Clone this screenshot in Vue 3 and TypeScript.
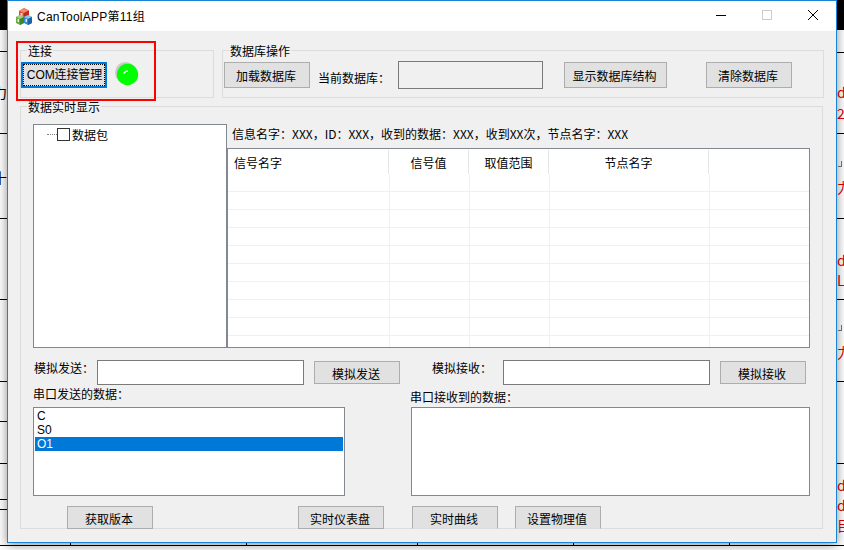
<script setup lang="ts">
const leftLines: number[] = [51, 133, 218, 299, 381, 421, 463, 499, 509]
const rightLines: number[] = [52, 133, 218, 299, 381, 463]
const ticks: number[] = [70, 246, 417, 573, 729]
const returnMarks: number[] = [161, 325]
const scraps = [
  { t: '力', x: -7, y: 83, c: 'black' },
  { t: '十', x: -7, y: 168, c: 'black' },
  { t: 'dl', x: 837, y: 83, c: 'red' },
  { t: '2', x: 837, y: 104, c: 'red' },
  { t: '力', x: 837, y: 178, c: 'red' },
  { t: 'dl', x: 837, y: 251, c: 'red' },
  { t: 'L5', x: 837, y: 271, c: 'red' },
  { t: '力', x: 837, y: 343, c: 'red' },
  { t: 'dl', x: 837, y: 476, c: 'red' },
  { t: 'dl', x: 837, y: 496, c: 'red' },
  { t: '目', x: 837, y: 516, c: 'red' },
]
const columns = ['信号名字', '信号值', '取值范围', '节点名字', '']
const rowCount = 10
const sent = ['C', 'S0', 'O1']
</script>

<template>
  <div class="desktop">
    <div class="band band-l"></div>
    <div class="band band-r"></div>
    <i v-for="y in leftLines" :key="'l' + y" class="rule rule-l" :style="{ top: y + 'px' }"></i>
    <i v-for="y in rightLines" :key="'r' + y" class="rule rule-r" :style="{ top: y + 'px' }"></i>
    <i class="rule-b"></i>
    <i v-for="x in ticks" :key="'t' + x" class="tick" :style="{ left: x + 'px' }"></i>
    <i v-for="y in returnMarks" :key="'m' + y" class="ret" :style="{ top: y + 'px' }"></i>
    <span
      v-for="(s, i) in scraps"
      :key="i"
      class="scrap"
      :class="s.c"
      :style="{ left: s.x + 'px', top: s.y + 'px' }"
    >{{ s.t }}</span>

    <div class="window">
      <header class="titlebar">
        <svg class="app-icon" width="16" height="17" viewBox="0 0 16 17">
          <path d="M3 3L8 0L13 2.5V8L8 11L3 8Z" fill="#dc4a2e" />
          <path d="M3 3L8 0L13 2.5L8 5Z" fill="#f08a6a" />
          <path d="M8 5L13 2.5V8L8 11Z" fill="#b92e1c" />
          <rect x="4.5" y="5" width="2" height="3" fill="#f7d3c6" />
          <path d="M0 9L4 7L8 9V15L4 17L0 15Z" fill="#6aa845" />
          <path d="M0 9L4 7L8 9L4 11Z" fill="#a3cf7e" />
          <path d="M4 11L8 9V15L4 17Z" fill="#45832c" />
          <rect x="1.5" y="11" width="1.5" height="3" fill="#e2f0d4" />
          <path d="M8 9L12 7L16 9V15L12 17L8 15Z" fill="#2f8bd0" />
          <path d="M8 9L12 7L16 9L12 11Z" fill="#86c4ee" />
          <path d="M12 11L16 9V15L12 17Z" fill="#1c639f" />
          <rect x="9.5" y="11" width="1.5" height="3" fill="#d8ecfa" />
        </svg>
        <span class="title">CanToolAPP第11组</span>
        <div class="controls">
          <span class="ctl">
            <svg width="10" height="10" viewBox="0 0 10 10"><path d="M0 5.5H10" stroke="#000" /></svg>
          </span>
          <span class="ctl">
            <svg width="10" height="10" viewBox="0 0 10 10"><rect x=".5" y=".5" width="9" height="9" fill="none" stroke="#ccc" /></svg>
          </span>
          <span class="ctl">
            <svg width="10" height="10" viewBox="0 0 10 10"><path d="M0 0L10 10M10 0L0 10" stroke="#000" stroke-width="1" /></svg>
          </span>
        </div>
      </header>

      <main class="content">
        <div class="top-row">
          <fieldset class="group g-conn">
            <span class="legend">连接</span>
            <button class="btn btn-focus"><span class="focus-ring">COM连接管理</span></button>
            <svg class="led" width="24" height="24" viewBox="0 0 24 24">
              <circle cx="10.5" cy="10.5" r="10.5" fill="#c9c9c9" />
              <circle cx="12.5" cy="12.5" r="10.7" fill="#00ff00" />
              <path d="M8.5 11.5L11 9.2H13" stroke="#fff" stroke-width="1.4" fill="none" />
            </svg>
          </fieldset>

          <fieldset class="group g-db">
            <span class="legend">数据库操作</span>
            <button class="btn">加载数据库</button>
            <span class="db-label">当前数据库：</span>
            <input class="db-input" type="text" readonly />
            <button class="btn btn-struct">显示数据库结构</button>
            <button class="btn btn-clear">清除数据库</button>
          </fieldset>
        </div>

        <fieldset class="group g-live">
          <span class="legend">数据实时显示</span>

          <div class="data-row">
            <div class="tree">
              <span class="dots"></span>
              <span class="check"></span>
              <span class="node">数据包</span>
            </div>
            <div class="data-right">
              <div class="info">信息名字：XXX，ID：XXX，收到的数据：XXX，收到XX次，节点名字：XXX</div>
              <div class="table">
                <div class="thead">
                  <div v-for="(c, i) in columns" :key="i" class="th" :class="'c' + i">{{ c }}</div>
                </div>
                <div v-for="r in rowCount" :key="r" class="tr">
                  <div v-for="(c, i) in columns" :key="i" class="td" :class="'d' + i"></div>
                </div>
              </div>
            </div>
          </div>

          <div class="sim-row">
            <span class="sim-label sim-a">模拟发送：</span>
            <input class="sim-input" type="text" />
            <button class="btn btn-sim">模拟发送</button>
            <span class="sim-label sim-b">模拟接收：</span>
            <input class="sim-input" type="text" />
            <button class="btn btn-sim">模拟接收</button>
          </div>

          <div class="lists">
            <div class="col col-send">
              <div class="list-label">串口发送的数据：</div>
              <div class="list">
                <div v-for="(s, i) in sent" :key="s" class="item" :class="{ selected: i === 2 }">{{ s }}</div>
              </div>
            </div>
            <div class="col col-recv">
              <div class="list-label">串口接收到的数据：</div>
              <div class="list"></div>
            </div>
          </div>

          <div class="actions">
            <button class="btn btn-low a1">获取版本</button>
            <button class="btn btn-low a2">实时仪表盘</button>
            <button class="btn btn-low btn-cut a3">实时曲线</button>
            <button class="btn btn-low btn-cut a4">设置物理值</button>
          </div>
        </fieldset>
      </main>

      <div class="annotation"></div>
    </div>
  </div>
</template>

<style scoped>
.desktop {
  position: relative;
  width: 844px;
  height: 550px;
  overflow: hidden;
  background: #fff;
  font-family: "Noto Sans CJK SC", "Liberation Sans", sans-serif;
  font-size: 12px;
  color: #000;
}
.band {
  position: absolute;
  top: 0;
  height: 30px;
  background: #000;
}
.band-l { left: 0; width: 7px; }
.band-r { left: 837px; width: 7px; }
.rule {
  position: absolute;
  height: 1px;
  background: #000;
  width: 7px;
}
.rule-l { left: 0; }
.rule-r { left: 837px; }
.rule-b {
  position: absolute;
  left: 0;
  top: 545px;
  width: 844px;
  height: 1px;
  background: #000;
}
.tick {
  position: absolute;
  top: 543px;
  width: 1px;
  height: 3px;
  background: #000;
}
.ret {
  position: absolute;
  left: 838px;
  width: 4px;
  height: 6px;
  box-sizing: border-box;
  border-right: 1px solid #777;
  border-bottom: 1px solid #777;
}
.scrap {
  position: absolute;
  font-size: 14px;
  line-height: 18px;
  white-space: nowrap;
}
.scrap.red { color: #e00000; }
.scrap.black { color: #000; }

.window {
  position: relative;
  z-index: 1;
  box-sizing: border-box;
  margin-left: 7px;
  width: 830px;
  height: 543px;
  border: 1px solid #1883d7;
  background: #f0f0f0;
  box-shadow: 0 2px 10px rgba(0, 0, 0, 0.45);
  display: flex;
  flex-direction: column;
}
.titlebar {
  height: 30px;
  flex: none;
  background: #fff;
  display: flex;
  align-items: center;
  padding-left: 8px;
}
.app-icon { flex: none; margin: 0 5px 0 0; }
.title {
  font-family: "Liberation Sans", "Noto Sans CJK SC", sans-serif;
  font-size: 12px;
  letter-spacing: 0.25px;
  margin-top: -1px;
}
.controls { margin-left: auto; display: flex; }
.ctl {
  width: 46px;
  height: 30px;
  display: flex;
  align-items: center;
  justify-content: center;
  padding-bottom: 2px;
  box-sizing: border-box;
}

.content {
  flex: 1;
  padding: 19px 0 0 12px;
  min-height: 0;
}
.top-row { display: flex; gap: 8px; }

.group {
  position: relative;
  box-sizing: border-box;
  margin: 0;
  min-width: 0;
  border: 1px solid #dcdcdc;
}
.legend {
  position: absolute;
  top: -8px;
  left: 6px;
  line-height: 16px;
  padding: 0 1px;
  background: #f0f0f0;
}
.g-conn {
  width: 194px;
  height: 48px;
  padding: 11px 0 0 0;
  display: flex;
  align-items: flex-start;
}
.g-db {
  width: 602px;
  height: 48px;
  padding: 2px 0 0 1px;
  display: flex;
  align-items: center;
}
.g-db > * { flex: none; }
.g-db > .legend { position: absolute; }

.btn {
  box-sizing: border-box;
  width: 86px;
  height: 26px;
  padding: 1px 2px 0 0;
  border: 1px solid #adadad;
  background: #e1e1e1;
  font: inherit;
  color: #000;
  white-space: nowrap;
  flex: none;
}
.btn-focus {
  border: 2px solid #0078d7;
  display: flex;
  padding: 0;
}
.focus-ring {
  flex: 1;
  border: 1px dotted #000;
  font-family: "Liberation Sans", "Noto Sans CJK SC", sans-serif;
  line-height: 21px;
  letter-spacing: -0.1px;
  padding-left: 1px;
}
.led { margin: 0 0 0 8px; flex: none; }

.db-label {
  width: 80px;
  margin-left: 8px;
  padding-top: 5px;
  line-height: 16px;
}
.db-input {
  box-sizing: border-box;
  width: 145px;
  height: 28px;
  border: 1px solid #7a7a7a;
  background: #f0f0f0;
  padding: 0;
  outline: none;
}
.btn-struct { width: 103px; margin-left: 21px; }
.btn-clear { margin-left: 39px; }

.g-live {
  width: 803px;
  height: 423px;
  margin-top: 8px;
  padding: 17px 0 0 12px;
}
.data-row { display: flex; height: 224px; }
.tree {
  box-sizing: border-box;
  width: 194px;
  height: 224px;
  border: 1px solid #828790;
  background: #fff;
  display: flex;
  align-items: flex-start;
  padding: 3px 0 0 13px;
}
.dots {
  width: 10px;
  margin-top: 6px;
  border-top: 1px dotted #808080;
  flex: none;
}
.check {
  box-sizing: border-box;
  width: 13px;
  height: 13px;
  border: 1px solid #333;
  flex: none;
}
.node { margin: -1px 0 0 2px; line-height: 16px; }
.data-right {
  width: 583px;
  display: flex;
  flex-direction: column;
}
.info {
  height: 24px;
  padding-left: 5px;
  line-height: 19px;
  white-space: nowrap;
}
.table {
  box-sizing: border-box;
  height: 200px;
  border: 1px solid #828790;
  background: #fff;
  overflow: hidden;
}
.thead { display: flex; height: 25px; }
.tr { display: flex; height: 18px; box-sizing: border-box; border-bottom: 1px solid #f0f0f0; }
.th {
  box-sizing: border-box;
  height: 24px;
  margin-top: 1px;
  padding-top: 5px;
  line-height: 16px;
  text-align: center;
  border-right: 1px solid #e5e5e5;
  flex: none;
}
.td {
  box-sizing: border-box;
  border-right: 1px solid #f0f0f0;
  flex: none;
}
.c0 { width: 161px; text-align: left; padding-left: 6px; }
.c1, .c2 { width: 80px; }
.c3 { width: 160px; }
.c4, .d4 { border-right: 0; flex: 1; }
.d0 { width: 162px; }
.d1, .d2 { width: 80px; }
.d3 { width: 160px; }

.sim-row {
  display: flex;
  align-items: flex-start;
  margin-top: 12px;
  height: 25px;
}
.sim-label { line-height: 16px; flex: none; }
.sim-a { margin-left: 1px; width: 63px; }
.sim-b { margin-left: 32px; width: 71px; }
.sim-input {
  box-sizing: border-box;
  width: 207px;
  height: 25px;
  border: 1px solid #7a7a7a;
  background: #fff;
  padding: 0;
  outline: none;
  flex: none;
}
.btn-sim { height: 23px; margin: 1px 0 0 10px; }

.lists { display: flex; }
.col { flex: none; }
.col-send { width: 312px; margin-right: 66px; padding-top: 1px; }
.col-recv { width: 399px; padding-top: 4px; }
.list-label { line-height: 16px; }
.col-recv .list-label { margin-left: -1px; }
.col-send .list-label { margin-bottom: 5px; }
.col-recv .list-label { margin-bottom: 2px; }
.list {
  box-sizing: border-box;
  height: 89px;
  border: 1px solid #828790;
  background: #fff;
  padding: 1px;
}
.item {
  height: 14px;
  line-height: 15px;
  padding-left: 2px;
  font-family: "Liberation Sans", "Noto Sans CJK SC", sans-serif;
}
.item.selected { background: #0078d7; color: #fff; }

.actions { display: flex; margin-top: 10px; }
.btn-low { height: 23px; }
.btn-cut { border-bottom-color: #dcdcdc; }
.a1 { margin-left: 34px; }
.a2 { margin-left: 145px; }
.a3 { margin-left: 28px; }
.a4 { margin-left: 17px; }

.annotation {
  position: absolute;
  left: 8px;
  top: 40px;
  box-sizing: border-box;
  width: 140px;
  height: 60px;
  border: 2px solid #ff0000;
  pointer-events: none;
}
</style>
